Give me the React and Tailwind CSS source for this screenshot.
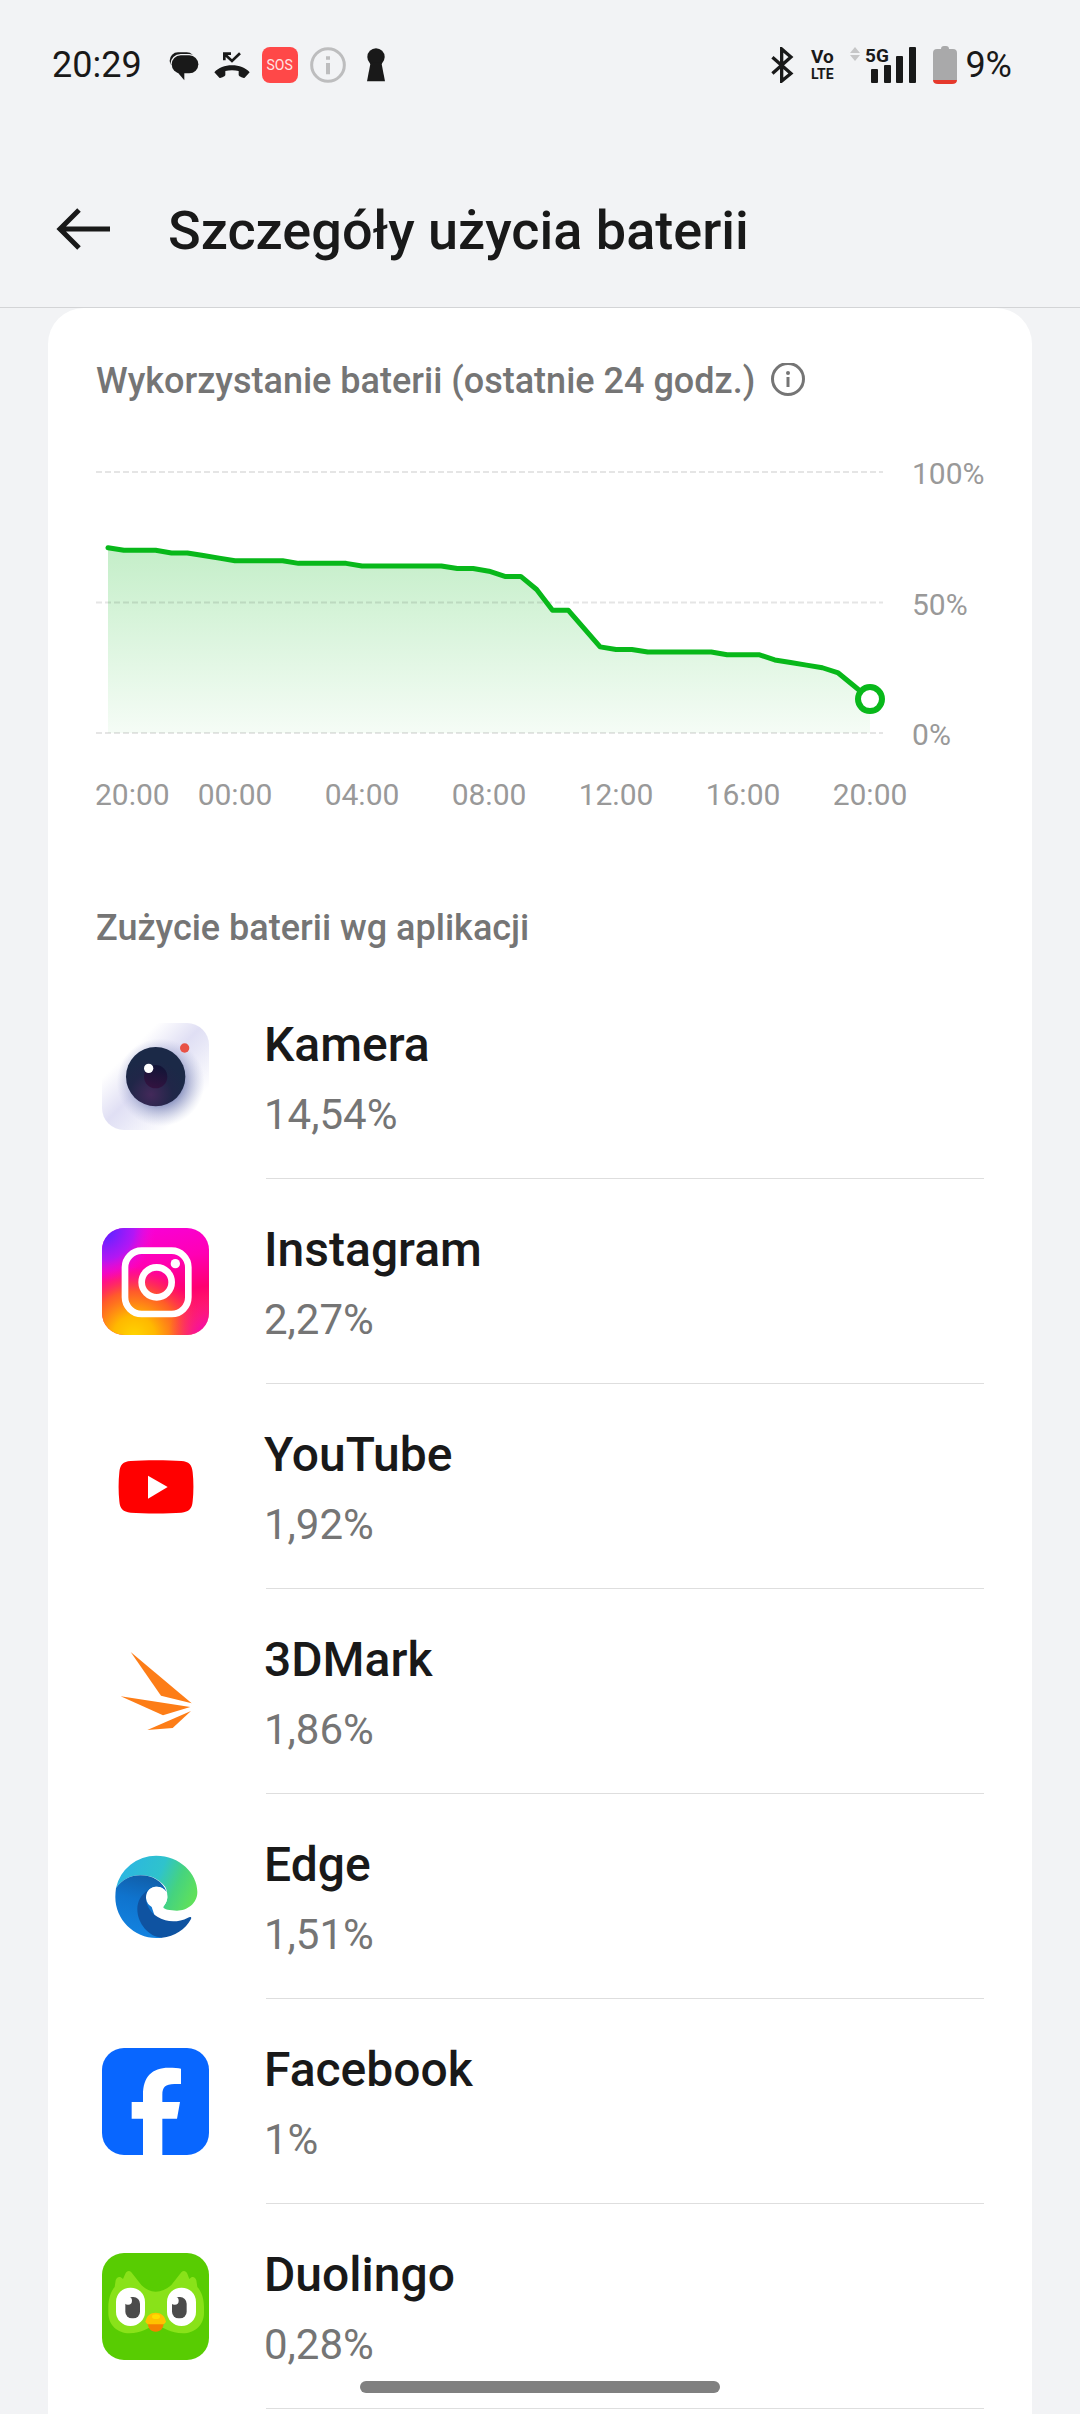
const BATTERY_LEVELS = [
  71, 70, 70, 70, 69, 69, 68, 67, 66, 66, 66, 66, 65, 65, 65, 65, 64, 64, 64, 64, 64, 64, 63, 63, 62,
  60, 60, 55, 47, 47, 40, 33, 32, 32, 31, 31, 31, 31, 31, 30, 30, 30, 28, 27, 26, 25, 23, 18, 13,
]

const TIME_LABELS = ['00:00', '04:00', '08:00', '12:00', '16:00', '20:00']

// plot area inside the chart's viewBox
const PLOT = { left: 12, right: 774, top: 19, bottom: 280 }

const APPS = [
  { name: 'Kamera', usage: '14,54%', Icon: CameraIcon },
  { name: 'Instagram', usage: '2,27%', Icon: InstagramIcon },
  { name: 'YouTube', usage: '1,92%', Icon: YouTubeIcon },
  { name: '3DMark', usage: '1,86%', Icon: ThreeDMarkIcon },
  { name: 'Edge', usage: '1,51%', Icon: EdgeIcon },
  { name: 'Facebook', usage: '1%', Icon: FacebookIcon },
  { name: 'Duolingo', usage: '0,28%', Icon: DuolingoIcon },
]

function AppSvg({ children }) {
  return <svg viewBox="0 0 321 321" className="size-[107px]" aria-hidden="true">{children}</svg>
}

function CameraIcon() {
  return (
    <AppSvg>
      <defs>
        <linearGradient id="cam-bg" x1="0" y1="0" x2="1" y2="1">
          <stop offset="0.26" stopColor="#fff" />
          <stop offset="0.48" stopColor="#e0dff4" />
          <stop offset="0.58" stopColor="#e8e8f7" />
          <stop offset="0.8" stopColor="#fff" />
        </linearGradient>
        <radialGradient id="cam-shadow">
          <stop offset="0.5" stopColor="#6f7ab0" stopOpacity="0.75" />
          <stop offset="1" stopColor="#aeb4d8" stopOpacity="0" />
        </radialGradient>
        <radialGradient id="cam-lens" cx="0.42" cy="0.8" r="0.6">
          <stop offset="0" stopColor="#43295a" />
          <stop offset="0.6" stopColor="#202648" />
          <stop offset="1" stopColor="#1b2947" />
        </radialGradient>
        <linearGradient id="cam-pupil" x1="0.7" y1="0" x2="0.4" y2="1">
          <stop offset="0" stopColor="#101436" />
          <stop offset="1" stopColor="#331340" />
        </linearGradient>
      </defs>
      <rect width="321" height="321" rx="66" fill="url(#cam-bg)" />
      <circle cx="176" cy="178" r="132" fill="url(#cam-shadow)" />
      <circle cx="161" cy="161" r="89" fill="url(#cam-lens)" />
      <circle cx="161" cy="161" r="35" fill="url(#cam-pupil)" />
      <circle cx="140" cy="136" r="14" fill="#fff" />
      <circle cx="248" cy="75" r="14" fill="#e85146" />
    </AppSvg>
  )
}

function InstagramIcon() {
  return (
    <AppSvg>
      <defs>
        <linearGradient id="ig-base" x1="0.3" y1="0" x2="0.5" y2="1">
          <stop offset="0" stopColor="#f800d8" />
          <stop offset="0.35" stopColor="#ff00b4" />
          <stop offset="0.65" stopColor="#ff0070" />
          <stop offset="1" stopColor="#ff3c5c" />
        </linearGradient>
        <radialGradient id="ig-yellow" cx="0.3" cy="1.02" r="0.66">
          <stop offset="0" stopColor="#ffd600" />
          <stop offset="0.3" stopColor="#ffb800" />
          <stop offset="0.65" stopColor="#ff6a1c" stopOpacity="0.85" />
          <stop offset="1" stopColor="#ff2f50" stopOpacity="0" />
        </radialGradient>
        <radialGradient id="ig-purple" cx="0" cy="0" r="0.5">
          <stop offset="0.2" stopColor="#6a22ff" />
          <stop offset="0.6" stopColor="#a01cff" stopOpacity="0.8" />
          <stop offset="1" stopColor="#f012e0" stopOpacity="0" />
        </radialGradient>
        <radialGradient id="ig-magenta" cx="1" cy="1" r="0.38">
          <stop offset="0" stopColor="#f000c0" />
          <stop offset="1" stopColor="#ff0090" stopOpacity="0" />
        </radialGradient>
      </defs>
      <rect width="321" height="321" rx="66" fill="url(#ig-base)" />
      <rect width="321" height="321" rx="66" fill="url(#ig-yellow)" />
      <rect width="321" height="321" rx="66" fill="url(#ig-purple)" />
      <rect width="321" height="321" rx="66" fill="url(#ig-magenta)" />
      <g fill="none" stroke="#fff" strokeWidth="20">
        <rect x="69" y="68" width="190" height="190" rx="50" />
        <circle cx="164" cy="163" r="45" />
      </g>
      <circle cx="220" cy="107" r="14" fill="#fff" />
    </AppSvg>
  )
}

function YouTubeIcon() {
  return (
    <AppSvg>
      <path
        d="M86 84C125 81 199 81 238 84C261 86 270 95 272 118C275 145 275 178 272 205C270 228 261 237 238 239C199 242 125 242 86 239C63 237 54 228 52 205C49 178 49 145 52 118C54 95 63 86 86 84Z"
        fill="#f00"
      />
      <path d="M138 128L197 162L138 197Z" fill="#fff" />
    </AppSvg>
  )
}

function ThreeDMarkIcon() {
  return (
    <AppSvg>
      <g fill="#fd7d17">
        <path d="M86 42L269 196L177 173Z" />
        <path d="M56 175L265 207L183 232Z" />
        <path d="M136 276L267 219L212 270Z" />
      </g>
    </AppSvg>
  )
}

function EdgeIcon() {
  return (
    <AppSvg>
      <defs>
        <linearGradient id="edge-top" x1="0" y1="0.3" x2="1" y2="0.6">
          <stop offset="0" stopColor="#2bb4e4" />
          <stop offset="0.5" stopColor="#2fc3cc" />
          <stop offset="0.75" stopColor="#45d37f" />
          <stop offset="1" stopColor="#5fe05c" />
        </linearGradient>
        <linearGradient id="edge-blue" x1="0.6" y1="0" x2="0.4" y2="1">
          <stop offset="0" stopColor="#115ea8" />
          <stop offset="0.4" stopColor="#0f73cd" />
          <stop offset="1" stopColor="#1384e2" />
        </linearGradient>
      </defs>
      <path
        d="M42 135A123 123 0 0 1 163 38C232 38 286 90 286 147C286 182 255 203 225 203C205 203 184 199 184 193C184 189 196 180 196 160C196 150 194 140 190 132C170 108 148 97 115 97C85 97 60 110 42 135Z"
        fill="url(#edge-top)"
      />
      <path
        d="M42 135C60 110 85 97 115 97C150 97 182 114 194 147C187 136 176 131 164 131C150 131 140 138 135 150L180 284C105 294 40 235 40 162C40 152 41 143 42 135Z"
        fill="url(#edge-blue)"
      />
      <path
        d="M137 142C118 155 106 175 106 199C106 240 140 283 180 284C218 280 250 260 267 228C270 222 264 221 258 224C235 236 210 237 190 232C155 222 132 195 132 165C132 155 134 147 137 142Z"
        fill="#0f53a1"
      />
      <circle cx="164" cy="163" r="32" fill="#fff" />
    </AppSvg>
  )
}

function FacebookIcon() {
  return (
    <AppSvg>
      <rect width="321" height="321" rx="66" fill="#0866ff" />
      <path
        d="M123 321V212H89V162H123V140C123 86 150 59 200 59C215 59 230 60 237 62V108H217C190 108 181 118 181 140V162H234L225 212H181V321Z"
        fill="#fff"
      />
    </AppSvg>
  )
}

function DuolingoIcon() {
  return (
    <AppSvg>
      <rect width="321" height="321" rx="66" fill="#58cc02" />
      <path
        d="M161 116C180 116 195 108 208 96L238 58C244 51 252 53 256 62L262 78C270 68 280 71 283 82L286 102C299 116 306 138 306 162V180C306 216 278 241 243 241C205 241 185 222 161 216C140 222 120 241 82 241C47 241 19 216 19 180V162C19 138 26 116 38 102L41 82C44 71 54 68 63 78L70 62C74 53 82 51 88 58L118 96C130 108 143 116 161 116Z"
        fill="#89e219"
      />
      <rect x="42" y="104" width="87" height="115" rx="43" fill="#fff" />
      <rect x="195" y="104" width="87" height="115" rx="43" fill="#fff" />
      <rect x="70" y="132" width="44" height="64" rx="20" fill="#4b4b4b" />
      <rect x="210" y="132" width="44" height="64" rx="20" fill="#4b4b4b" />
      <circle cx="78" cy="143" r="12" fill="#fff" />
      <circle cx="218" cy="143" r="12" fill="#fff" />
      <path d="M137 208H185C185 226 176 236 161 236C146 236 137 226 137 208Z" fill="#f48000" />
      <path d="M130 206C134 188 145 179 161 179C177 179 188 188 192 206C190 211 185 214 180 214H142C137 214 132 211 130 206Z" fill="#ffc200" />
      <ellipse cx="162" cy="191" rx="12" ry="7" fill="#ffde00" />
    </AppSvg>
  )
}

function StatusBar() {
  return (
    <div className="flex h-32 items-center justify-between pl-[52px] pr-[68px] pt-0.5 text-4xl">
      <div className="flex items-center gap-6">
        <span>20:29</span>
        <div className="flex items-center gap-3">
          <svg viewBox="0 0 108 108" className="size-9" aria-hidden="true">
            <rect x="11" y="16" width="76" height="50" rx="25" fill="#191919" />
            <rect x="13" y="21" width="88" height="62" rx="31" fill="#f2f3f5" />
            <rect x="17" y="25" width="80" height="54" rx="27" fill="#191919" />
            <path d="M28 68L55 100V74Z" fill="#191919" />
          </svg>
          <svg viewBox="0 0 108 108" className="size-9" aria-hidden="true">
            <path
              d="M54 55C32 55 14 62 1 76L16 92C20 95 33 88 34 84V72C46 69 62 69 74 72V84C75 88 88 95 92 92L107 76C94 62 76 55 54 55Z"
              fill="#191919"
            />
            <path d="M78 19L54 42L34 23M31 40V20H51" fill="none" stroke="#191919" strokeWidth="8" />
          </svg>
          <span className="flex size-9 items-center justify-center rounded-lg bg-[#ff4848] text-[14px] leading-none text-[#ffe3e3]">
            SOS
          </span>
          <svg viewBox="0 0 108 108" className="size-9" aria-hidden="true">
            <circle cx="54" cy="54" r="49" fill="none" stroke="#bdbdbe" strokeWidth="9" />
            <path d="M48 28h12v10H48zM48 48h12v34H48z" fill="#bdbdbe" />
          </svg>
          <svg viewBox="0 0 108 108" className="size-9" aria-hidden="true">
            <circle cx="54" cy="30" r="26" fill="#191919" />
            <path d="M38 46H70L81 103H27Z" fill="#191919" />
          </svg>
        </div>
      </div>
      <div className="flex items-center gap-4">
        <svg viewBox="92 47 72 109" className="h-9 w-6" aria-hidden="true">
          <path d="M99 78L155 127L127 150V53L155 77L99 127" fill="none" stroke="#191919" strokeWidth="10" />
        </svg>
        <span className="flex h-9 w-6 flex-col items-center justify-center font-bold">
          <span className="text-[19px] leading-[18px]">Vo</span>
          <span className="text-[14px] leading-[16px]">LTE</span>
        </span>
        <svg viewBox="0 -4 67 40" className="mb-1 h-10 w-[67px]" aria-hidden="true">
          <path d="M0 6L5 0L10 6ZM0 8L5 14L10 8Z" fill="#c6c6c7" />
          <text x="15" y="15" fontSize="19" className="font-bold" fill="#191919">5G</text>
          <g fill="#191919">
            <rect x="21" y="22" width="7" height="14" rx="1" />
            <rect x="34" y="18" width="7" height="18" rx="1" />
            <rect x="46" y="9" width="7" height="27" rx="1" />
            <rect x="59" y="0" width="7" height="36" rx="1" />
          </g>
        </svg>
        <div className="flex items-center gap-2">
          <svg viewBox="0 0 24 38" className="h-[38px] w-6" aria-hidden="true">
            <path d="M4 3H8C8 1 9 0 11 0H13C15 0 16 1 16 3H20Q24 3 24 7V34H0V7Q0 3 4 3Z" fill="#a9a9aa" />
            <path d="M0 34H24Q24 38 19 38H5Q0 38 0 34Z" fill="#e5382c" />
          </svg>
          <span>9%</span>
        </div>
      </div>
    </div>
  )
}

function BatteryChart() {
  const step = (PLOT.right - PLOT.left) / (BATTERY_LEVELS.length - 1)
  const yOf = level => PLOT.bottom - (level / 100) * (PLOT.bottom - PLOT.top)
  const points = BATTERY_LEVELS.map((level, i) => `${PLOT.left + i * step},${yOf(level)}`)
  const last = BATTERY_LEVELS[BATTERY_LEVELS.length - 1]

  return (
    <svg viewBox="0 0 888 360" className="mt-12 w-full" role="img" aria-label="Poziom baterii, ostatnie 24 godz.">
      <defs>
        <linearGradient id="area" gradientUnits="userSpaceOnUse" x1="0" y1="94" x2="0" y2="280">
          <stop offset="0" stopColor="#08b81a" stopOpacity="0.24" />
          <stop offset="1" stopColor="#08b81a" stopOpacity="0.04" />
        </linearGradient>
      </defs>
      <polygon points={`${PLOT.left},${PLOT.bottom} ${points.join(' ')} ${PLOT.right},${PLOT.bottom}`} fill="url(#area)" />
      {[100, 50, 0].map(level => (
        <g key={level}>
          <line x1="0" x2="787" y1={yOf(level)} y2={yOf(level)} stroke="#000" strokeOpacity="0.1" strokeWidth="2" strokeDasharray="6 3" />
          <text x="816" y={yOf(level) + 12} fontSize="30" fill="#999">{level}%</text>
        </g>
      ))}
      <polyline points={points.join(' ')} fill="none" stroke="#08b81a" strokeWidth="5" strokeLinecap="round" strokeLinejoin="round" />
      <circle cx={PLOT.right} cy={yOf(last)} r="12" fill="#fff" stroke="#08b81a" strokeWidth="6" />
      <text x="-1" y="352" fontSize="30" fill="#999">20:00</text>
      {TIME_LABELS.map((label, i) => (
        <text key={label} x={PLOT.left + (i + 1) * 8 * step} y="352" fontSize="30" fill="#999" textAnchor="middle">{label}</text>
      ))}
    </svg>
  )
}

export default function App() {
  return (
    <div className="flex min-h-screen flex-col bg-[#f2f3f5] font-[Roboto,sans-serif] text-[#191919]">
      <StatusBar />
      <header className="flex items-center border-b border-[#d3d4d6] pb-[46px] pl-[54px] pt-[73px]">
        <button type="button" aria-label="Wstecz" className="mr-[54px] flex h-[60px] w-[60px] items-center">
          <svg viewBox="0 0 60 60" className="size-[60px]" fill="none" stroke="#191919" strokeWidth="5" aria-hidden="true">
            <path d="M56 28H6M25 9L6 28L25 47" />
          </svg>
        </button>
        <h1 className="text-[54px] font-medium leading-[60px]">Szczegóły użycia baterii</h1>
      </header>

      <main className="mx-12 flex-1 rounded-t-[36px] bg-white px-12 pt-[49px]">
        <div className="flex items-center gap-[15px]">
          <h2 className="text-4xl font-medium leading-[48px] text-[#757575]">Wykorzystanie baterii (ostatnie 24 godz.)</h2>
          <button type="button" aria-label="Informacje" className="size-9">
            <svg viewBox="0 0 36 36" className="size-9" fill="none" stroke="#757575" aria-hidden="true">
              <circle cx="18" cy="16" r="15.5" strokeWidth="3" />
              <path d="M18 14V24" strokeWidth="3" />
              <circle cx="18" cy="10" r="2" fill="#757575" stroke="none" />
            </svg>
          </button>
        </div>
        <BatteryChart />

        <h2 className="mb-[22px] mt-[91px] text-4xl font-medium leading-[48px] text-[#757575]">Zużycie baterii wg aplikacji</h2>
        <ul>
          {APPS.map(({ name, usage, Icon }) => (
            <li key={name}>
              <button type="button" className="flex h-[204px] w-full items-center gap-[55px] pl-[6px] text-left">
                <Icon />
                <span className="flex flex-col gap-4 pt-0.5">
                  <span className="text-5xl font-medium leading-[60px]">{name}</span>
                  <span className="text-[42px] leading-[48px] text-[#757575]">{usage}</span>
                </span>
              </button>
              <div className="ml-[170px] h-px bg-[#dedede]" />
            </li>
          ))}
        </ul>
      </main>

      <div className="fixed bottom-[21px] left-1/2 h-3 w-1/3 -translate-x-1/2 rounded-full bg-[#808080]" />
    </div>
  )
}
